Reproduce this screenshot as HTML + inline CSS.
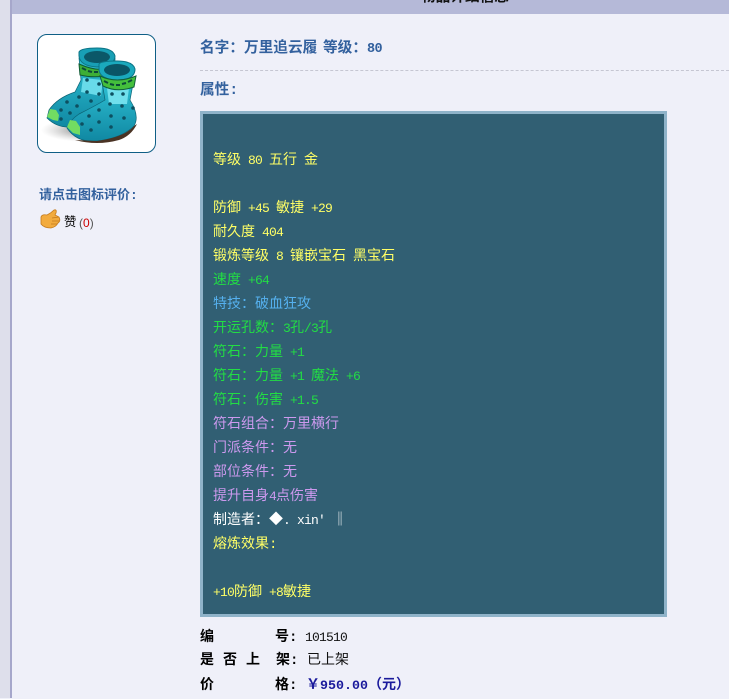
<!DOCTYPE html>
<html><head><meta charset="utf-8">
<style>
html,body{margin:0;padding:0}
body{width:729px;height:698px;position:relative;overflow:hidden;background:#eff0f9;font-family:"Liberation Mono","WenQuanYi Zen Hei","Noto Sans CJK SC",monospace;font-size:14px;line-height:24px}
.a{position:absolute;white-space:pre}
.l{left:213px;height:24px;font-size:14px;line-height:24px}
.y{color:#ffff66}.g{color:#22dd44}.b{color:#55b0ee}.p{color:#cc99ee}.w{color:#fff}
.h{color:#33619e;font-weight:bold;font-size:14.67px}
.k{color:#000;font-weight:bold;font-size:14px}
i{font-style:normal;font-size:13px;letter-spacing:-.8px}
</style></head><body>
<div class="a" style="left:0;top:0;width:10px;height:698px;background:#dedfeb"></div>
<div class="a" style="left:10px;top:0;width:2px;height:698px;background:#a6a7cb"></div>
<div class="a" style="left:12px;top:0;width:717px;height:14px;background:#b5b9d8;overflow:hidden"><span class="a" style="left:409px;top:-14px;font-weight:bold;color:#111;font-size:14.67px;line-height:24px">物品详细信息</span></div>

<div class="a" style="left:37px;top:34px;width:117px;height:117px;border:1.5px solid #0f5f86;border-radius:10px;background:#fff"></div>
<svg class="a" style="left:37px;top:34px" width="120" height="120" viewBox="0 0 120 120">
<defs><radialGradient id="s"><stop offset="0" stop-color="#444" stop-opacity=".75"/><stop offset="1" stop-color="#999" stop-opacity="0"/></radialGradient>
<linearGradient id="f" x1="0" y1="0" x2="0" y2="1"><stop offset="0" stop-color="#2fc0d4"/><stop offset="1" stop-color="#1088a2"/></linearGradient></defs>
<ellipse cx="50" cy="96" rx="46" ry="12" fill="url(#s)"/>
<path d="M42 24 L44 46 L38 58 Q20 64 12 76 L10 84 Q20 94 34 93 L62 88 L78 60 L78 24Z" fill="url(#f)" stroke="#0c6274" stroke-width=".7"/>
<path d="M46 44 L66 46 L64 62 L44 58Z" fill="#68dbe9"/>
<path d="M42 18 Q44 14 60 14 Q76 14 78 22 Q78 32 60 33 Q43 32 42 22Z" fill="#189fb5" stroke="#0c7486"/>
<ellipse cx="60" cy="23" rx="13" ry="6" fill="#0b5868"/>
<path d="M42 30 Q60 38 72 34 L68 42 Q55 44 43 41Z" fill="#3dae36" stroke="#0e5a34"/>
<path d="M45 34 l4 2 m2 1 l4 1 m2 0 l4 0" stroke="#0c4a38" stroke-width="2" fill="none"/>
<path d="M65 48 L68 66 Q58 72 42 80 Q33 86 30 94 Q40 109 60 107 Q85 104 97 92 Q103 82 93 66 L96 50Z" fill="url(#f)" stroke="#0c6274" stroke-width=".7"/>
<path d="M70 54 L92 54 L90 70 L72 70Z" fill="#70dfec"/>
<path d="M38 106 Q60 112 82 106 Q94 102 100 90 L97 92 Q88 103 60 107Z" fill="#4a3324"/>
<path d="M62 30 Q64 27 80 27 Q96 27 98 35 Q98 46 80 46 Q63 45 62 36Z" fill="#1aa9bd" stroke="#0c7486"/>
<ellipse cx="80" cy="36" rx="13" ry="6" fill="#0a5566"/>
<path d="M63 42 Q80 50 99 42 L97 53 Q80 59 66 52Z" fill="#44bf3c" stroke="#10603a"/>
<path d="M67 47 l4 2 m2 1 l4 1 m2 0 l4 0 m2 -1 l4 -1 m2 -1 l4 -2" stroke="#0c4a38" stroke-width="2" fill="none"/>
<path d="M10 83 L13 75 L19 76 L22 81 L21 87 L16 86Z" fill="#72dc62"/>
<path d="M30 93 L33 86 L39 87 L43 93 L43 101 L36 99Z" fill="#72dc62"/>
<g fill="#0d4f60">
<circle cx="50" cy="46" r="1.8"/><circle cx="62" cy="50" r="1.8"/><circle cx="50" cy="58" r="1.8"/><circle cx="62" cy="60" r="1.8"/><circle cx="42" cy="63" r="1.8"/><circle cx="54" cy="67" r="1.8"/><circle cx="30" cy="68" r="1.8"/><circle cx="40" cy="72" r="1.8"/><circle cx="24" cy="76" r="1.8"/><circle cx="33" cy="79" r="1.8"/><circle cx="24" cy="85" r="1.8"/>
<circle cx="75" cy="60" r="1.8"/><circle cx="86" cy="60" r="1.8"/><circle cx="73" cy="70" r="1.8"/><circle cx="85" cy="72" r="1.8"/><circle cx="96" cy="74" r="1.8"/><circle cx="62" cy="76" r="1.8"/><circle cx="74" cy="82" r="1.8"/><circle cx="87" cy="84" r="1.8"/><circle cx="52" cy="82" r="1.8"/><circle cx="62" cy="88" r="1.8"/><circle cx="45" cy="90" r="1.8"/><circle cx="74" cy="93" r="1.8"/><circle cx="54" cy="96" r="1.8"/>
</g></svg>

<div class="a h" style="left:39px;top:184px;font-size:13px">请点击图标评价:</div>
<svg class="a" style="left:40px;top:208px" width="21" height="22" viewBox="0 0 21 22"><path d="M1 9 Q2 6 7 7 Q11 5 14 2 Q17 1 16 5 L15 7 L19 9 Q21 13 18 15 Q16 19 11 20 Q4 20 1 16Z" fill="#f2ab3e" stroke="#c47a1c" stroke-width=".8"/><path d="M12 10 L19 9 M12 13 L19 13 M11 16 L17 16" stroke="#c47a1c" stroke-width=".8"/></svg>
<div class="a" style="left:64px;top:211px;color:#000;font-size:12.5px">赞</div>
<div class="a" style="left:79px;top:211px;font:12px/24px 'Liberation Sans',sans-serif;color:#555">(<span style="color:#c00">0</span>)</div>

<div class="a h" style="left:200px;top:37px">名字：万里追云履</div>
<div class="a h" style="left:323px;top:37px">等级：<span style="font-size:13.5px;letter-spacing:-.6px">80</span></div>
<div class="a" style="left:200px;top:70px;width:529px;border-top:1px dashed #c5c6d2"></div>
<div class="a h" style="left:200px;top:79px">属性:</div>

<div class="a" style="left:200px;top:111px;width:461px;height:500px;border:3px solid #8fb3c9;background:#315f73"></div>
<div class="a l y" style="top:149px">等级<i> 80 </i>五行<i> </i>金</div>
<div class="a l y" style="top:197px">防御<i> +45 </i>敏捷<i> +29</i></div>
<div class="a l y" style="top:221px">耐久度<i> 404</i></div>
<div class="a l y" style="top:245px">锻炼等级<i> 8 </i>镶嵌宝石<i> </i>黑宝石</div>
<div class="a l g" style="top:269px">速度<i> +64</i></div>
<div class="a l b" style="top:293px">特技：破血狂攻</div>
<div class="a l g" style="top:317px">开运孔数：<i>3</i>孔<i>/3</i>孔</div>
<div class="a l g" style="top:341px">符石：力量<i> +1</i></div>
<div class="a l g" style="top:365px">符石：力量<i> +1 </i>魔法<i> +6</i></div>
<div class="a l g" style="top:389px">符石：伤害<i> +1.5</i></div>
<div class="a l p" style="top:413px">符石组合：万里横行</div>
<div class="a l p" style="top:437px">门派条件：无</div>
<div class="a l p" style="top:461px">部位条件：无</div>
<div class="a l p" style="top:485px">提升自身<i>4</i>点伤害</div>
<div class="a l w" style="top:509px">制造者：◆<i>. xin</i></div>
<div class="a l w" style="top:509px;left:318px"><i>′</i></div>
<div class="a l w" style="top:509px;left:333px">‖</div>
<div class="a l y" style="top:533px">熔炼效果:</div>
<div class="a l y" style="top:581px"><i>+10</i>防御<i> +8</i>敏捷</div>

<div class="a k" style="left:200px;top:626px">编</div><div class="a k" style="left:275px;top:626px">号:</div><div class="a" style="left:305px;top:626px;color:#111;font-size:13px;letter-spacing:-.8px">101510</div>
<div class="a k" style="left:200px;top:649px">是</div><div class="a k" style="left:223px;top:649px">否</div><div class="a k" style="left:246px;top:649px">上</div><div class="a k" style="left:276px;top:649px">架:</div><div class="a" style="left:307px;top:649px;color:#111">已上架</div>
<div class="a k" style="left:200px;top:674px">价</div><div class="a k" style="left:275px;top:674px">格:</div><div class="a" style="left:306px;top:674px;color:#1a1a9c;font-weight:bold">￥<span style="font-size:13.33px">950.00</span>（元）</div>
</body></html>
